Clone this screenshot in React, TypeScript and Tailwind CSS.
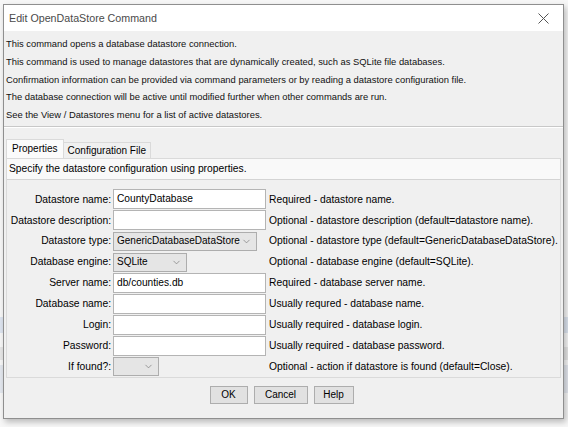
import { ChevronDown } from "lucide-react";

const lines = [
  "This command opens a database datastore connection.",
  "This command is used to manage datastores that are dynamically created, such as SQLite file databases.",
  "Confirmation information can be provided via command parameters or by reading a datastore configuration file.",
  "The database connection will be active until modified further when other commands are run.",
  "See the View / Datastores menu for a list of active datastores.",
];

type Row = {
  label: string;
  kind: "text" | "select";
  value?: string;
  width: string;
  note: string;
};

const rows: Row[] = [
  { label: "Datastore name:", kind: "text", value: "CountyDatabase", width: "w-[153px]", note: "Required - datastore name." },
  { label: "Datastore description:", kind: "text", width: "w-[153px]", note: "Optional - datastore description (default=datastore name)." },
  { label: "Datastore type:", kind: "select", value: "GenericDatabaseDataStore", width: "w-[144px]", note: "Optional - datastore type (default=GenericDatabaseDataStore)." },
  { label: "Database engine:", kind: "select", value: "SQLite", width: "w-[74px]", note: "Optional - database engine (default=SQLite)." },
  { label: "Server name:", kind: "text", value: "db/counties.db", width: "w-[153px]", note: "Required - database server name." },
  { label: "Database name:", kind: "text", width: "w-[153px]", note: "Usually requred - database name." },
  { label: "Login:", kind: "text", width: "w-[153px]", note: "Usually required - database login." },
  { label: "Password:", kind: "text", width: "w-[153px]", note: "Usually required - database password." },
  { label: "If found?:", kind: "select", width: "w-[46px]", note: "Optional - action if datastore is found (default=Close)." },
];

function Field({ row }: { row: Row }) {
  if (row.kind === "text") {
    return (
      <div className={`${row.width} h-[20px] bg-white border border-[#b4b4b4] flex items-center px-[3px] leading-none text-[10.2px]`}>
        {row.value}
      </div>
    );
  }
  return (
    <div className={`${row.width} h-[19px] bg-[#e5e5e5] border border-[#adadad] flex items-center justify-between pl-[3px] pr-[4px] leading-none text-[10px]`}>
      <span>{row.value}</span>
      <ChevronDown className="w-[11px] h-[11px] text-[#777]" strokeWidth={1.5} />
    </div>
  );
}

export default function App() {
  return (
    <div
      className="w-[568px] h-[427px] bg-[#f7f7f7] relative overflow-hidden text-black"
      style={{ fontFamily: '"Liberation Sans", Arial, sans-serif' }}
    >
      {/* app window behind the dialog */}
      <div className="flex flex-col pt-[317px]">
        <div className="h-[16px] bg-[#dde4ef]" />
        <div className="h-[14px] bg-[#f7f7f7]" />
        <div className="h-[13px] bg-[#e6e6e6]" />
        <div className="h-[5px] bg-[#f7f7f7]" />
        <div className="h-[28px] bg-[#e3e7ee]" />
      </div>

      <div className="absolute left-[3px] top-[4px] w-[561px] h-[415px] border border-[#8f8f8f] bg-[#f0f0f0] shadow-[2px_3px_6px_rgba(0,0,0,0.25)] flex flex-col">
        <div className="h-[26px] bg-white flex items-center justify-between pl-[5px] pr-[14px] shrink-0">
          <span className="text-[10.7px] text-[#4a4a4a]">Edit OpenDataStore Command</span>
          <svg width="11" height="11" viewBox="0 0 11 11" className="text-[#555]">
            <path d="M0.5 0.5 L10.5 10.5 M10.5 0.5 L0.5 10.5" stroke="currentColor" strokeWidth="1" />
          </svg>
        </div>

        <div className="flex flex-col pt-[4px] pl-[2px] text-[9.4px] text-[#111]">
          {lines.map((l) => (
            <div key={l} className="h-[17.8px] leading-[17.8px] whitespace-nowrap">
              {l}
            </div>
          ))}
        </div>

        <div className="mt-[2px] border-t border-[#c8c8c8] border-b-white border-b h-[2px]" />

        <div className="px-[2px] pt-[11px] text-[10.3px] flex flex-col">
          <div className="flex items-end text-[10px]">
            <div className="h-[19px] px-[5px] bg-[#fbfbfb] border border-b-0 border-[#dadada] flex items-center">
              Properties
            </div>
            <div className="h-[16px] px-[4px] bg-[#f0f0f0] border border-l-0 border-b-0 border-[#dadada] flex items-center">
              Configuration File
            </div>
          </div>
          <div className="h-[220px] border border-[#dadada] bg-[#f0f0f0] flex flex-col">
            <div className="h-[21px] bg-[#f9f9f9] flex items-center pl-[2px] border-b border-[#d4d4d4]">
              Specify the datastore configuration using properties.
            </div>
            <div className="flex flex-col pt-[9px]">
              {rows.map((r) => (
                <div key={r.label} className="h-[20.9px] flex items-center">
                  <div className="w-[104px] text-right whitespace-nowrap">{r.label}</div>
                  <div className="w-[155px] pl-[2px] flex">
                    <Field row={r} />
                  </div>
                  <div className="pl-[3px] whitespace-nowrap">{r.note}</div>
                </div>
              ))}
            </div>
          </div>
        </div>

        <div className="flex justify-center gap-[6px] pt-[8px] pr-[4px] text-[10px]">
          {[
            ["OK", "w-[38px]"],
            ["Cancel", "w-[54px]"],
            ["Help", "w-[40px]"],
          ].map(([t, w]) => (
            <div key={t} className={`${w} h-[18px] bg-[#e1e1e1] border border-[#adadad] flex items-center justify-center`}>
              {t}
            </div>
          ))}
        </div>
      </div>
    </div>
  );
}
